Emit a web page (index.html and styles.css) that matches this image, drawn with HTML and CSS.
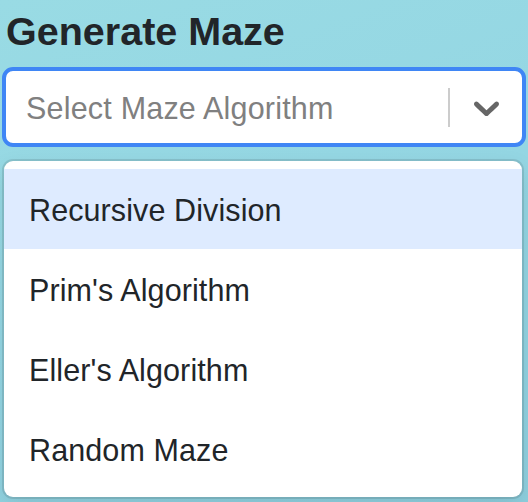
FILE: index.html
```html
<!DOCTYPE html>
<html lang="en">
<head>
<meta charset="utf-8">
<title>Generate Maze</title>
<link rel="stylesheet" href="styles.css">
</head>
<body>
<div class="panel">
  <h2 class="title">Generate Maze</h2>
  <div class="select">
    <div class="control">
      <div class="value">Select Maze Algorithm</div>
      <span class="separator"></span>
      <div class="indicator">
        <svg viewBox="0 0 20 20" width="43" height="43" aria-hidden="true"><path d="M4.516 7.548c0.436-0.446 1.043-0.481 1.576 0l3.908 3.747 3.908-3.747c0.533-0.481 1.141-0.446 1.574 0 0.436 0.445 0.408 1.197 0 1.615-0.406 0.418-4.695 4.502-4.695 4.502-0.217 0.223-0.502 0.335-0.787 0.335s-0.57-0.112-0.789-0.335c0 0-4.287-4.084-4.695-4.502s-0.436-1.170 0-1.615z"/></svg>
      </div>
    </div>
    <div class="menu">
      <div class="option focused">Recursive Division</div>
      <div class="option">Prim's Algorithm</div>
      <div class="option">Eller's Algorithm</div>
      <div class="option">Random Maze</div>
    </div>
  </div>
</div>
</body>
</html>
```

FILE: styles.css
```css
html, body {
  margin: 0;
  height: 100%;
}

body {
  background: linear-gradient(160deg, #99dbe4 0%, #94d6e3 50%, #8ecfde 100%);
  font-family: "Liberation Sans", Arial, sans-serif;
  color: #212529;
}

.panel {
  padding: 9px 2px 0 2px;
}

.title {
  margin: 0 0 14px;
  padding-left: 4px;
  font-size: 39.5px;
  line-height: 44px;
  font-weight: 700;
  color: #212529;
}

.control {
  box-sizing: border-box;
  height: 80px;
  display: flex;
  align-items: center;
  background: #fff;
  border: 4px solid #3f86f5;
  border-radius: 11px;
}

.value {
  flex: 1;
  padding-left: 20px;
  padding-top: 2px;
  font-size: 30.5px;
  letter-spacing: 0.2px;
  line-height: 36px;
  color: #808080;
}

.separator {
  width: 2px;
  height: 39px;
  background: #cccccc;
}

.indicator {
  display: flex;
  align-items: center;
  padding: 0 14px 0 15px;
}

.indicator svg {
  display: block;
  fill: #666666;
}

.menu {
  margin: 14px 4px 0 2px;
  padding: 8px 0;
  background: #fff;
  border-radius: 9px;
  box-shadow: 0 0 0 2px rgba(0, 0, 0, 0.1), 0 8px 22px rgba(0, 0, 0, 0.1);
  overflow: hidden;
}

.option {
  padding: 23px 25px 21px;
  font-size: 30.5px;
  letter-spacing: 0.1px;
  line-height: 36px;
  color: #212529;
}

.option.focused {
  background: #deebff;
}
```
